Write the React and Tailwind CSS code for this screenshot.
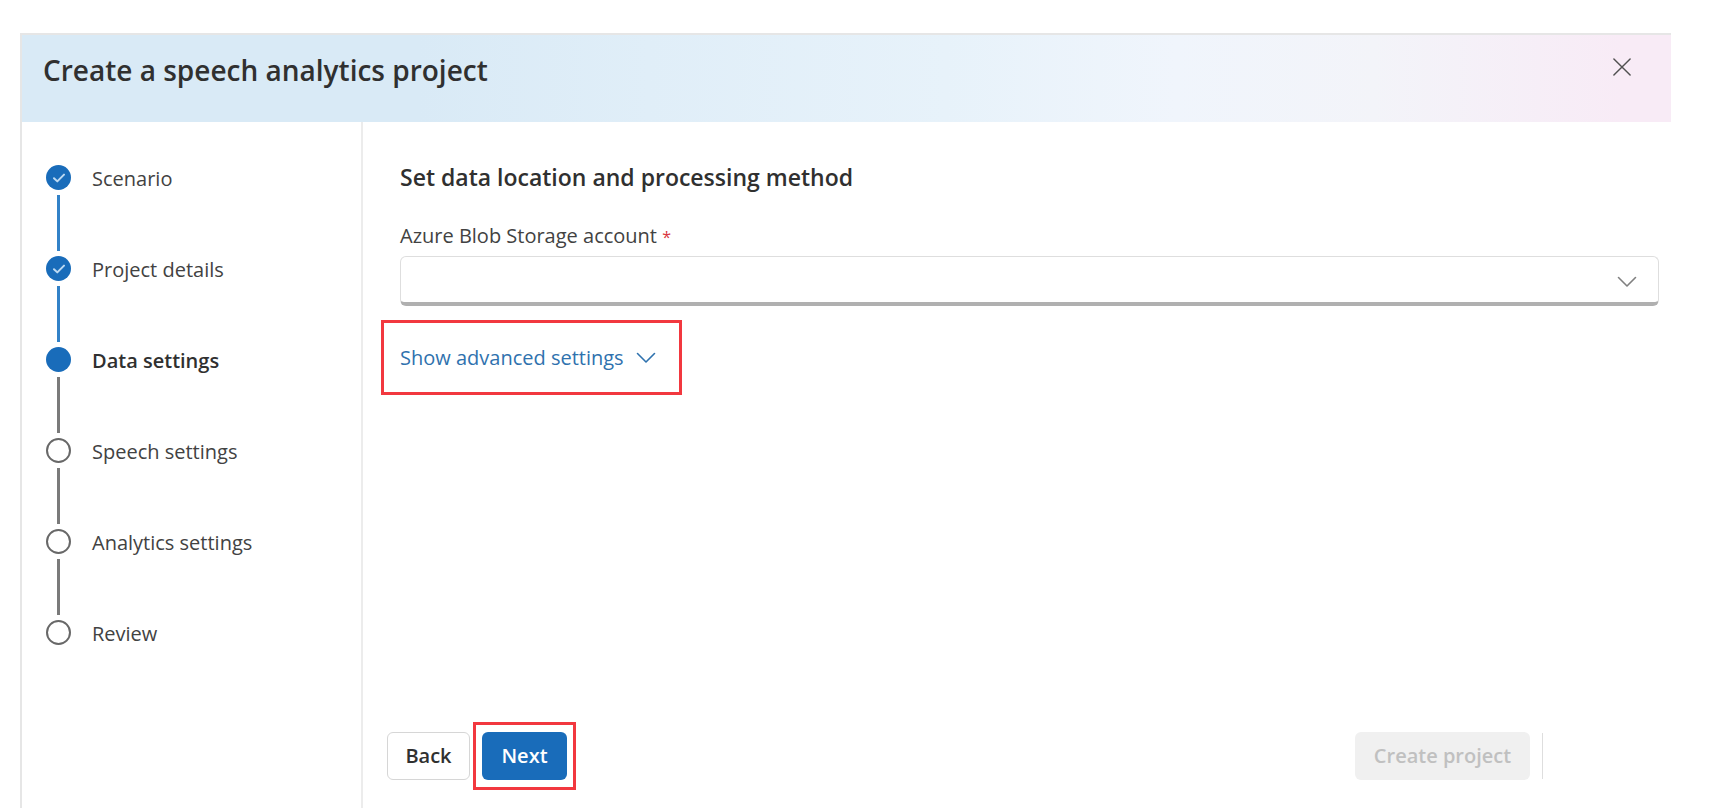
const steps = [
  { label: "Scenario", state: "done" },
  { label: "Project details", state: "done" },
  { label: "Data settings", state: "current" },
  { label: "Speech settings", state: "todo" },
  { label: "Analytics settings", state: "todo" },
  { label: "Review", state: "todo" },
];

const circleStyles = {
  done: "bg-[#196cba]",
  current: "bg-[#196cba]",
  todo: "border-2 border-[#686868] bg-white",
};

function Chevron({ className }) {
  return (
    <svg viewBox="0 0 20 12" fill="none" stroke="currentColor" strokeWidth="1.6" className={className} aria-hidden="true">
      <path d="M1.500 1.500 10 10l8.500-8.500" strokeLinecap="round" strokeLinejoin="round" />
    </svg>
  );
}

function Step({ label, state, last }) {
  return (
    <li className="flex gap-[21px]" aria-current={state === "current" ? "step" : undefined}>
      <div className="flex flex-col items-center">
        <span className={`flex size-[25px] items-center justify-center rounded-full ${circleStyles[state]}`}>
          {state === "done" && (
            <svg viewBox="0 0 12 10" className="h-2.5 w-3" fill="none" stroke="#bcd9f2" strokeWidth="2" aria-hidden="true">
              <path d="M1 5.200 4.300 8.400 11 1.600" strokeLinecap="round" strokeLinejoin="round" />
            </svg>
          )}
        </span>
        {!last && (
          <span className={`my-[5px] h-14 w-[3px] ${state === "done" ? "bg-[#3282c8]" : "bg-[#7a7a7a]"}`} />
        )}
      </div>
      <span className={`text-xl leading-7 ${state === "current" ? "font-semibold text-[#303030]" : "text-[#424242]"}`}>
        {label}
      </span>
    </li>
  );
}

export default function App() {
  return (
    <div className="flex min-h-screen flex-col bg-white pt-[33px] pr-[57px] pl-5 font-['Open_Sans','Noto_Sans',sans-serif] text-[#303030]">
      <div className="flex grow flex-col border-t-2 border-l-2 border-[#e6e6e6]">
        <header className="flex h-[87px] items-start justify-between bg-linear-[90deg,#d9eaf6_0%,#d9eaf6_24%,#e0eef8_38%,#e7f2fa_56%,#f0f5fc_70%,#f3f4f9_82%,#f8ebf6_97%] pt-[15px] pr-10 pl-[21px]">
          <h1 className="text-[28px] leading-10 font-semibold">Create a speech analytics project</h1>
          <button type="button" aria-label="Close" className="mt-2 text-[#505050]">
            <svg viewBox="0 0 20 20" className="size-[18px]" fill="none" stroke="currentColor" strokeWidth="1.600" aria-hidden="true">
              <path d="M1 1 19 19M19 1 1 19" strokeLinecap="round" />
            </svg>
          </button>
        </header>

        <div className="flex grow">
          <nav aria-label="Project steps" className="w-[341px] shrink-0 border-r-2 border-[#ececec] pt-[43px] pl-6">
            <ol>
              {steps.map((step, i) => (
                <Step key={step.label} {...step} last={i === steps.length - 1} />
              ))}
            </ol>
          </nav>

          <main className="flex grow flex-col pb-[18px] pl-[18px]">
            <div className="pt-10 pr-3 pl-[19px]">
              <h2 className="text-[23px] leading-[30px] font-semibold">Set data location and processing method</h2>
              <label htmlFor="storage" className="mt-[29px] block text-xl leading-[30px] text-[#424242]">
                Azure Blob Storage account <span className="text-base text-[#d9363e]">*</span>
              </label>
              <div className="relative mt-[5px]">
                <select
                  id="storage"
                  required
                  defaultValue=""
                  className="block h-[50px] w-full appearance-none rounded-md border border-b-4 border-[#dedede] border-b-[#b0b0b0] bg-white px-4 text-xl"
                >
                  <option value=""></option>
                </select>
                <Chevron className="pointer-events-none absolute top-5 right-[22px] h-3 w-5 text-[#808080]" />
              </div>
            </div>

            <div className="mt-3.5 flex h-[75px] self-start border-3 border-[#f2383f] pr-[23px] pl-4">
              <button type="button" className="flex items-center gap-3 text-xl text-[#2f72ae]">
                Show advanced settings
                <Chevron className="h-3 w-5" />
              </button>
            </div>

            <div className="mt-auto flex items-center pl-1.5">
              <button type="button" className="h-12 w-[83px] rounded-md border border-[#d6d6d6] text-xl font-semibold">
                Back
              </button>
              <div className="ml-[3px] border-3 border-[#f2383f] px-[6px] py-[7px]">
                <button type="button" className="h-12 w-[85px] rounded-md bg-[#196cba] text-xl font-semibold text-white">
                  Next
                </button>
              </div>
              <div className="mr-32 ml-auto flex items-center gap-3">
                <button
                  type="button"
                  disabled
                  className="h-12 w-[175px] rounded-md bg-[#f0f0f0] text-xl font-semibold text-[#c0c0c0]"
                >
                  Create project
                </button>
                <span className="h-[46px] w-px bg-[#dedede]" />
              </div>
            </div>
          </main>
        </div>
      </div>
    </div>
  );
}
